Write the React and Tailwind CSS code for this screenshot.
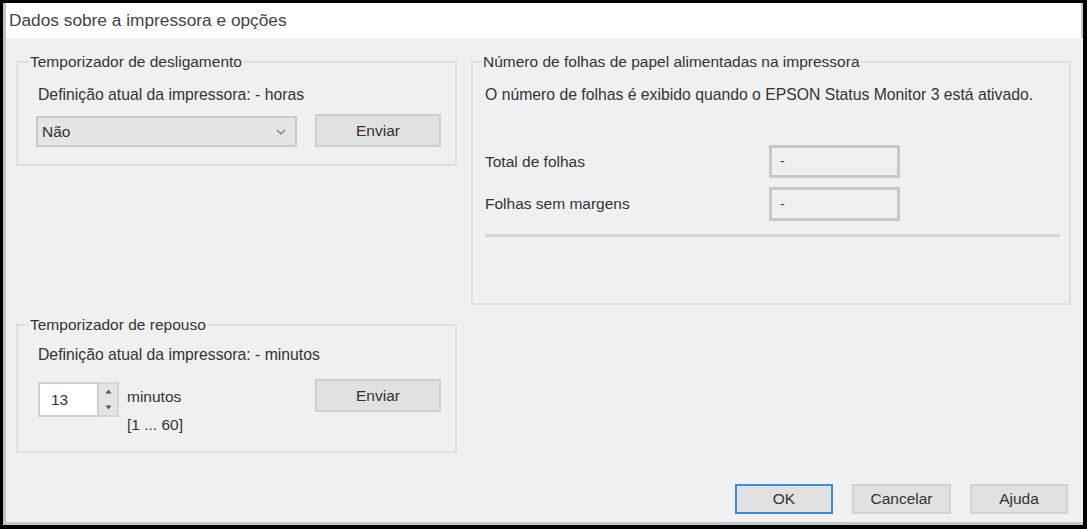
import React, { useState } from 'react';

const font = { fontFamily: '"Liberation Sans", Arial, sans-serif' };

function PushButton({ children, primary, className = '' }) {
  return (
    <button
      type="button"
      className={`h-[30px] w-[98px] bg-[#e1e1e1] text-[15.5px] text-[#333] ${
        primary ? 'border-2 border-[#3a8de3]' : 'border-2 border-[#d2d2d2]'
      } ${className}`}
    >
      {children}
    </button>
  );
}

function SendButton() {
  return (
    <button
      type="button"
      className="h-[33px] w-[126px] border-2 border-[#d0d0d0] bg-[#e1e1e1] text-[15.5px] text-[#333]"
    >
      Enviar
    </button>
  );
}

// group box: legend sits on the top border, content padding lives on the inner div
function GroupBox({ title, className = '', legendClass = 'ml-[11px]', bodyClass = '', children }) {
  return (
    <fieldset className={`border-2 border-[#e0e0e0] ${className}`}>
      <legend className={`${legendClass} px-[1px] text-[15.5px] leading-[18px] text-[#333]`}>{title}</legend>
      <div className={bodyClass}>{children}</div>
    </fieldset>
  );
}

function Spinner({ value, onChange }) {
  return (
    <div className="flex h-[35px]">
      <div className="flex w-[61px] items-center border-2 border-[#cfcfcf] bg-white pl-[11px] text-[15.5px] text-[#333]">
        {value}
      </div>
      <div className="flex w-[20px] flex-col border-y-2 border-r-2 border-[#d6d6d6] bg-[#e4e4e4]">
        <button type="button" onClick={() => onChange(Math.min(60, value + 1))} className="flex flex-1 items-center justify-center">
          <svg width="7" height="5" viewBox="0 0 7 5"><path d="M3.5 0.5 L6.5 4.5 L0.5 4.5 Z" fill="#555" /></svg>
        </button>
        <button type="button" onClick={() => onChange(Math.max(1, value - 1))} className="flex flex-1 items-center justify-center">
          <svg width="7" height="5" viewBox="0 0 7 5"><path d="M0.5 0.5 L6.5 0.5 L3.5 4.5 Z" fill="#555" /></svg>
        </button>
      </div>
    </div>
  );
}

function ReadoutRow({ label, boxClass }) {
  return (
    <div className="flex items-center">
      <span className="w-[284px] text-[15.5px] text-[#333]">{label}</span>
      <div className={`flex w-[131px] items-center border-[3px] border-[#c8c8c8] bg-[#f0f0f0] pl-[8px] text-[14px] text-[#444] ${boxClass}`}>
        -
      </div>
    </div>
  );
}

export default function App() {
  const [minutes, setMinutes] = useState(13);

  return (
    <div style={font} className="flex h-[529px] w-[1087px] bg-black pb-[4px] pl-[3px] pr-[4px] pt-[3px]">
      <div className="flex flex-1 flex-col border-l-[3px] border-[#c3c3c3]">
        {/* title bar */}
        <div className="flex h-[35px] items-center border-r-2 border-[#c8c8c8] bg-white pl-[3px] text-[17.3px] text-[#444]">
          Dados sobre a impressora e opções
        </div>

        {/* dialog body */}
        <div className="flex flex-1 flex-col border-b-[3px] border-[#c8c8c8] bg-[#f0f0f0] pl-[10px] pr-[12px] pt-[15px]">
          <div className="flex gap-[14px]">
            <div className="flex w-[441px] flex-col">
              <GroupBox title="Temporizador de desligamento" bodyClass="pb-[17px] pl-[18px] pr-[14px]">
                <div className="ml-[2px] mt-[15px] text-[15.75px] leading-[18px] text-[#333]">
                  Definição atual da impressora: - horas
                </div>
                <div className="mt-[10px] flex items-end justify-between">
                  <div className="flex h-[31px] w-[261px] items-center justify-between border-2 border-[#cbcbcb] bg-[#e5e5e5] pl-[4px] pr-[9px] text-[15.5px] text-[#333]">
                    <span>Não</span>
                    <svg width="10" height="6" viewBox="0 0 10 6">
                      <polyline points="1,1 5,5 9,1" fill="none" stroke="#777" strokeWidth="1.2" />
                    </svg>
                  </div>
                  <SendButton />
                </div>
              </GroupBox>

              <GroupBox title="Temporizador de repouso" className="mt-[150px]" bodyClass="pb-[17px] pl-[20px] pr-[14px]">
                <div className="mt-[12px] text-[15.75px] leading-[18px] text-[#333]">
                  Definição atual da impressora: - minutos
                </div>
                <div className="mt-[15px] flex items-start justify-between">
                  <div className="mt-[3px] flex items-start">
                    <Spinner value={minutes} onChange={setMinutes} />
                    <div className="ml-[8px] mt-[6px] flex flex-col gap-[10px] text-[15.5px] leading-[18px] text-[#333]">
                      <span>minutos</span>
                      <span>[1 ... 60]</span>
                    </div>
                  </div>
                  <SendButton />
                </div>
              </GroupBox>
            </div>

            <GroupBox
              title="Número de folhas de papel alimentadas na impressora"
              legendClass="ml-[9px]"
              className="h-[252px] flex-1"
              bodyClass="pl-[12px] pr-[9px]"
            >
              <div className="mt-[15px] text-[15.75px] leading-[18px] text-[#333]">
                O número de folhas é exibido quando o EPSON Status Monitor 3 está ativado.
              </div>
              <div className="mt-[41px] flex flex-col gap-[9px]">
                <ReadoutRow label="Total de folhas" boxClass="h-[33px]" />
                <ReadoutRow label="Folhas sem margens" boxClass="h-[34px]" />
              </div>
              <div className="mt-[13px] h-[3px] bg-[#d6d6d6]" />
            </GroupBox>
          </div>

          <div className="mb-[8px] mr-[3px] mt-auto flex justify-end gap-[19px]">
            <PushButton primary className="w-[97px]">OK</PushButton>
            <PushButton className="w-[99px]">Cancelar</PushButton>
            <PushButton>Ajuda</PushButton>
          </div>
        </div>
      </div>
    </div>
  );
}
